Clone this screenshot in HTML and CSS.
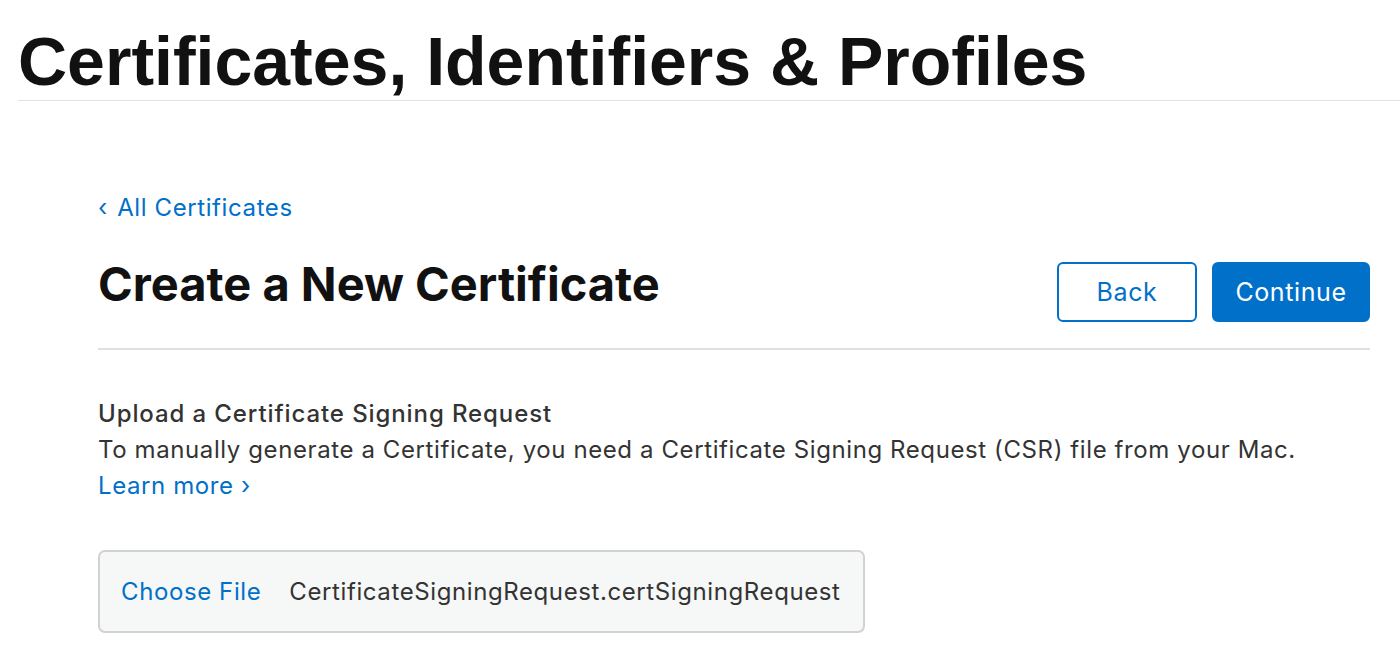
FILE: index.html
```html
<!DOCTYPE html>
<html lang="en">
<head>
<meta charset="utf-8">
<title>Certificates, Identifiers &amp; Profiles</title>
<link rel="stylesheet" href="styles.css">
</head>
<body>
<header class="top">
  <h1 class="top-title">Certificates, Identifiers &amp; Profiles</h1>
</header>
<main class="main">
  <a class="back-link" href="#"><span class="chev">‹</span> All Certificates</a>
  <div class="head-row">
    <h2 class="page-title">Create a New Certificate</h2>
    <div class="actions">
      <button class="btn btn-outline" type="button">Back</button>
      <button class="btn btn-primary" type="button">Continue</button>
    </div>
  </div>
  <section class="upload">
    <h3 class="upload-title">Upload a Certificate Signing Request</h3>
    <p class="upload-text">To manually generate a Certificate, you need a Certificate Signing Request (CSR) file from your Mac.</p>
    <a class="learn" href="#">Learn more ›</a>
    <div class="file-box">
      <span class="choose">Choose File</span>
      <span class="file-name">CertificateSigningRequest.certSigningRequest</span>
    </div>
  </section>
</main>
</body>
</html>
```

FILE: styles.css
```css
* { box-sizing: border-box; }
html, body { margin: 0; padding: 0; background: #fff; }
body {
  font-family: Inter, "Noto Sans", sans-serif;
  color: #333;
  overflow: hidden;
  letter-spacing: 0.6px;
}

.top {
  margin-left: 18px;
  border-bottom: 1px solid #e3e3e3;
  height: 101px;
  display: flex;
  align-items: flex-end;
}
.top-title {
  margin: 0 0 -1px 0;
  font-family: "Liberation Sans", Arial, sans-serif;
  font-weight: 700;
  font-size: 68px;
  line-height: 80px;
  color: #111;
  letter-spacing: 0;
}

.main {
  padding: 90px 30px 0 98px;
}
.back-link {
  display: block;
  color: #0070c9;
  text-decoration: none;
  font-size: 24px;
  line-height: 34px;
}
.chev { display: inline-block; margin-right: 2px; }

.head-row {
  margin-top: 37px;
  display: flex;
  justify-content: space-between;
  align-items: flex-start;
  border-bottom: 2px solid #e0e0e0;
  padding-bottom: 26px;
}
.page-title {
  margin: -6px 0 0 0;
  font-size: 47px;
  font-weight: 700;
  color: #111;
  line-height: 56px;
  letter-spacing: 0;
}
.actions { display: flex; gap: 15px; }
.btn {
  font-family: Inter, "Noto Sans", sans-serif;
  font-size: 25px;
  letter-spacing: 0.6px;
  height: 60px;
  border-radius: 6px;
  cursor: pointer;
}
.btn-outline {
  width: 140px;
  background: #fff;
  color: #0070c9;
  border: 2px solid #0070c9;
}
.btn-primary {
  width: 158px;
  background: #0070c9;
  color: #fff;
  border: 2px solid #0070c9;
}

.upload { padding-top: 46px; }
.upload-title {
  margin: 0;
  font-size: 24px;
  font-weight: 500;
  color: #333;
  line-height: 36px;
  letter-spacing: 0.9px;
}
.upload-text {
  margin: 0;
  font-size: 24px;
  line-height: 36px;
  color: #333;
}
.learn {
  display: block;
  color: #0070c9;
  text-decoration: none;
  font-size: 24px;
  line-height: 36px;
}
.file-box {
  margin-top: 46px;
  width: 767px;
  height: 83px;
  background: #f6f7f7;
  border: 2px solid #d2d2d2;
  border-radius: 7px;
  display: flex;
  align-items: center;
  padding-left: 21px;
  font-size: 24px;
}
.choose { color: #0070c9; margin-right: 28px; }
.file-name { color: #333; }
```
